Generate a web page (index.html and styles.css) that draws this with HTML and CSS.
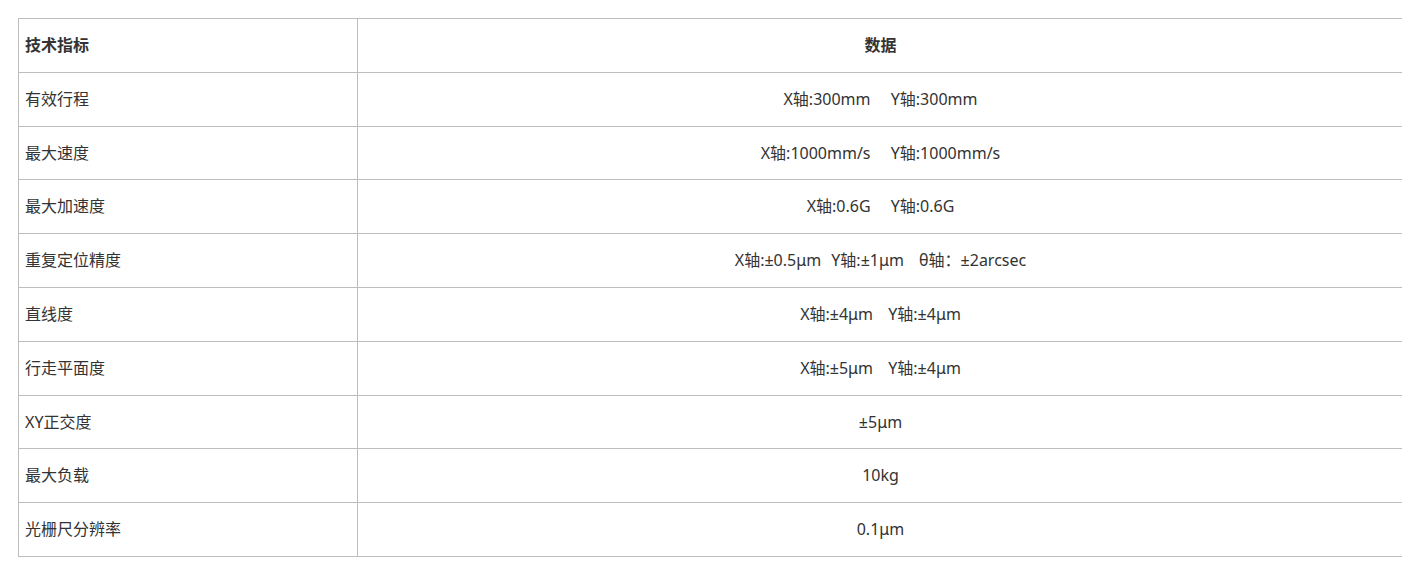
FILE: index.html
```html
<!DOCTYPE html>
<html lang="zh-CN">
<head>
<meta charset="utf-8">
<title>技术指标</title>
<link rel="stylesheet" href="styles.css">
</head>
<body>
<div class="wrap">
<table class="spec">
  <thead>
    <tr><th class="name">技术指标</th><th class="val">数据</th></tr>
  </thead>
  <tbody>
    <tr><td class="name">有效行程</td><td class="val">X轴:300mm&nbsp;&nbsp;&nbsp;&nbsp;Y轴:300mm</td></tr>
    <tr><td class="name">最大速度</td><td class="val">X轴:1000mm/s&nbsp;&nbsp;&nbsp;&nbsp;Y轴:1000mm/s</td></tr>
    <tr><td class="name">最大加速度</td><td class="val">X轴:0.6G&nbsp;&nbsp;&nbsp;&nbsp;Y轴:0.6G</td></tr>
    <tr><td class="name">重复定位精度</td><td class="val">X轴:±0.5μm&nbsp;&nbsp;Y轴:±1μm&nbsp;&nbsp;&nbsp;θ轴：±2arcsec</td></tr>
    <tr><td class="name">直线度</td><td class="val">X轴:±4μm&nbsp;&nbsp;&nbsp;Y轴:±4μm</td></tr>
    <tr><td class="name">行走平面度</td><td class="val">X轴:±5μm&nbsp;&nbsp;&nbsp;Y轴:±4μm</td></tr>
    <tr><td class="name">XY正交度</td><td class="val">±5μm</td></tr>
    <tr><td class="name">最大负载</td><td class="val">10kg</td></tr>
    <tr><td class="name">光栅尺分辨率</td><td class="val">0.1μm</td></tr>
  </tbody>
</table>
</div>
</body>
</html>
```

FILE: styles.css
```css
html, body {
  margin: 0;
  padding: 0;
  background: #fff;
  overflow: hidden;
}
.wrap {
  padding: 18px 0 0 18px;
}
.spec {
  border-collapse: collapse;
  width: 1388px;
  font-family: "Noto Sans", "Noto Sans CJK SC", sans-serif;
  font-size: 16px;
  color: #333;
}
.spec th, .spec td {
  border: 1px solid #bdbdbd;
  padding: 15px 8px 15px 6px;
  line-height: 22.8px;
  font-weight: normal;
}
.spec th {
  font-weight: bold;
}
.spec .name {
  width: 324px;
  text-align: left;
}
.spec .val {
  text-align: center;
  word-spacing: 0.9px;
}
```
